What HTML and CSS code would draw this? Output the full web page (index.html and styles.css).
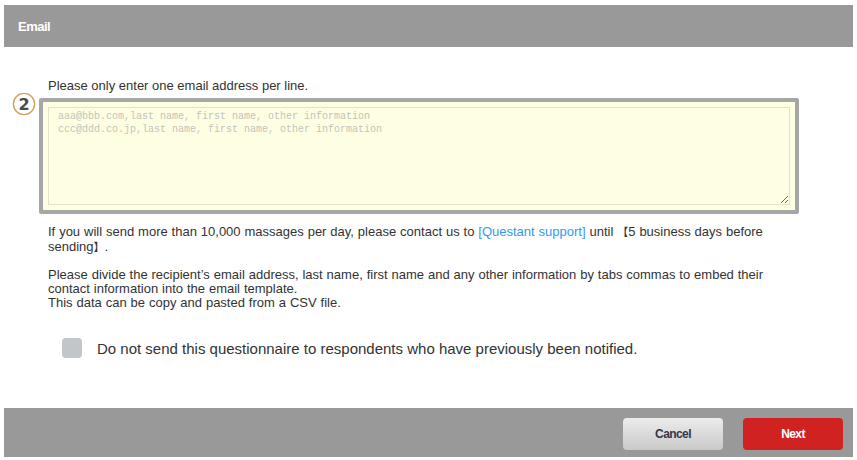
FILE: index.html
```html
<!DOCTYPE html>
<html lang="en">

<head>
    <meta charset="UTF-8">
    <title>Email</title>
    <link rel="stylesheet" href="styles.css">
</head>

<body>
    <div class="dialog">
        <header class="dialog-head">Email</header>
        <div class="dialog-body">
            <p class="intro">Please only enter one email address per line.</p>
            <div class="field-row">
                <svg class="step" width="24" height="24" viewBox="0 0 24 24">
                    <circle cx="12" cy="12" r="10.6" fill="#fff" stroke="#d9a05b" stroke-width="1.4"/>
                    <text x="12" y="17.6" text-anchor="middle">2</text>
                </svg>
                <div class="address-box">
                    <textarea class="addresses" placeholder="aaa@bbb.com,last name, first name, other information&#10;ccc@ddd.co.jp,last name, first name, other information"></textarea>
                </div>
            </div>
            <div class="notes">
                <p>If you will send more than 10,000 massages per day, please contact us to <a href="#">[Questant support]</a> until <span class="cjk">【</span>5 business days before sending<span class="cjk">】</span>.</p>
                <p>Please divide the recipient’s email address, last name, first name and any other information by tabs commas to embed their contact information into the email template.<br>This data can be copy and pasted from a CSV file.</p>
            </div>
            <label class="skip">
                <span class="box"></span>
                Do not send this questionnaire to respondents who have previously been notified.
            </label>
        </div>
        <footer class="dialog-foot">
            <button class="btn btn-cancel">Cancel</button>
            <button class="btn btn-next">Next</button>
        </footer>
    </div>
</body>

</html>
```

FILE: styles.css
```css
body {
    margin: 0;
    background: #fff;
    font-family: "Liberation Sans", Arial, "Noto Sans CJK JP", sans-serif;
    color: #333;
}

.dialog {
    margin: 5px 4px 3px;
}

.dialog-head {
    height: 42px;
    background-color: #999;
    color: #fff;
    font-size: 13px;
    font-weight: bold;
    letter-spacing: -0.5px;
    padding-left: 14px;
    display: flex;
    align-items: center;
}

.dialog-body {
    height: 361px;
    padding: 32px 0 0 8px;
    box-sizing: border-box;
}

.intro {
    margin: 0 0 5px 36px;
    font-size: 13px;
    line-height: 14px;
}

.field-row {
    display: flex;
    align-items: flex-start;
    gap: 3px;
}

.step {
    margin-top: -6px;
}

.step text {
    font-family: "DejaVu Sans", sans-serif;
    font-size: 16px;
    font-weight: bold;
    fill: #4a4a4a;
}

.address-box {
    width: 760px;
    height: 116px;
    box-sizing: border-box;
    border: 4px solid #a6a6a6;
    border-radius: 2px;
    padding: 5px;
    background-color: #fefee2;
}

.addresses {
    display: block;
    width: 100%;
    height: 100%;
    box-sizing: border-box;
    margin: 0;
    border: 1px solid #e4e3c9;
    background-color: #fefee2;
    padding: 3px 9px;
    font-family: "Liberation Mono", monospace;
    font-size: 10px;
    line-height: 12.5px;
    resize: vertical;
    outline: none;
}

.addresses::placeholder {
    color: #c4c4bc;
}

.notes {
    margin: 10px 0 0 36px;
    width: 740px;
    font-size: 13px;
    line-height: 14px;
    word-spacing: 0.3px;
}

.notes p {
    margin: 0 0 14px;
}

.notes a {
    color: #3399ee;
    text-decoration: none;
}

.cjk {
    font-family: "Noto Sans CJK JP", sans-serif;
    font-size: 11px;
    line-height: 14px;
}

.skip {
    display: flex;
    align-items: center;
    gap: 15px;
    margin: 28px 0 0 50px;
    font-size: 15px;
    color: #333;
}

.skip .box {
    width: 20px;
    height: 20px;
    border-radius: 4px;
    background-color: #c2c6ca;
}

.dialog-foot {
    height: 49px;
    background-color: #999;
    display: flex;
    justify-content: flex-end;
    align-items: flex-start;
    gap: 20px;
    padding: 10px 10px 0 0;
    box-sizing: border-box;
}

.btn {
    width: 100px;
    height: 32px;
    border: none;
    border-radius: 4px;
    font-family: "Liberation Sans", Arial, sans-serif;
    font-size: 12px;
    font-weight: bold;
    letter-spacing: -0.6px;
    cursor: pointer;
}

.btn-cancel {
    background: linear-gradient(#ececec, #c9c9c9);
    color: #36364a;
}

.btn-next {
    background-color: #d12222;
    color: #fff;
}
```
